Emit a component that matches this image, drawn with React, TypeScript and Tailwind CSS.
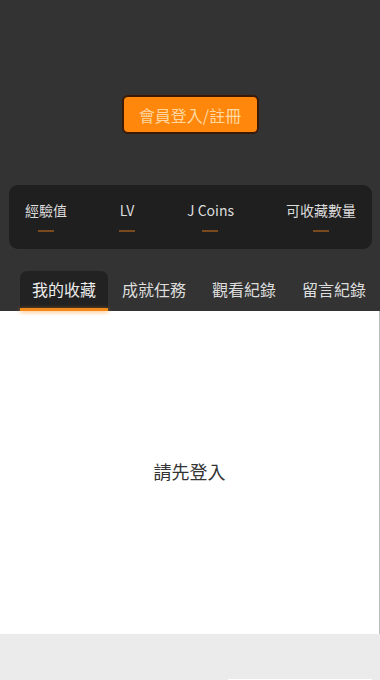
import React from "react";

const font = { fontFamily: '"Noto Sans CJK TC", "Noto Sans", sans-serif' };

export default function App() {
  const stats = ["經驗值", "LV", "J Coins", "可收藏數量"];
  const tabs = ["我的收藏", "成就任務", "觀看紀錄", "留言紀錄"];
  return (
    <div className="w-[380px] h-[680px] flex flex-col bg-[#ebebeb] overflow-hidden" style={font}>
      <div className="bg-[#333333] flex flex-col">
        <div className="h-[95px]" />
        <div className="flex justify-center">
          <button className="w-[137px] h-[39px] rounded-[6px] bg-[#ff870c] border-2 border-[#3a1a06] text-[#ffd7a0] text-[16px] leading-none flex items-center justify-center">
            會員登入/註冊
          </button>
        </div>
        <div className="h-[51px]" />
        <div className="mx-[9px] mr-[8px] h-[64px] rounded-[9px] bg-[#1f1f1f] flex justify-between px-4 pt-[16px]">
          {stats.map((s) => (
            <div key={s} className="flex flex-col items-center">
              <span className="text-[14px] leading-[18px] text-[#dcdcdc]">{s}</span>
              <div className="mt-[11px] w-[16px] h-[2px] bg-[#7a4a1e]" />
            </div>
          ))}
        </div>
        <div className="h-[22px]" />
        <div className="flex pl-[20px] gap-[2px] h-[40px]">
          {tabs.map((t, i) => (
            <div
              key={t}
              className={
                i === 0
                  ? "relative w-[88px] px-3 flex items-center justify-center bg-[#222222] rounded-t-[7px] text-[16px] text-[#eeeeee]"
                  : "relative w-[88px] px-3 flex items-center justify-center text-[16px] text-[#dddddd]"
              }
            >
              <span className="leading-none pb-[4px]">{t}</span>
              {i === 0 && (
                <div className="absolute left-0 right-0 bottom-0 h-[3px] bg-[#f08a1a] shadow-[0_1px_4px_rgba(255,150,40,0.7)]" />
              )}
            </div>
          ))}
        </div>
      </div>
      <div className="h-[323px] bg-white border-r border-[#bdbdbd] flex items-center justify-center">
        <span className="text-[18px] text-[#333333] leading-none pb-[3px]">請先登入</span>
      </div>
      <div className="flex-1 bg-[#ebebeb] flex flex-col justify-end">
        <div className="ml-[228px] mr-[8px] h-[1px] bg-white" />
      </div>
    </div>
  );
}
